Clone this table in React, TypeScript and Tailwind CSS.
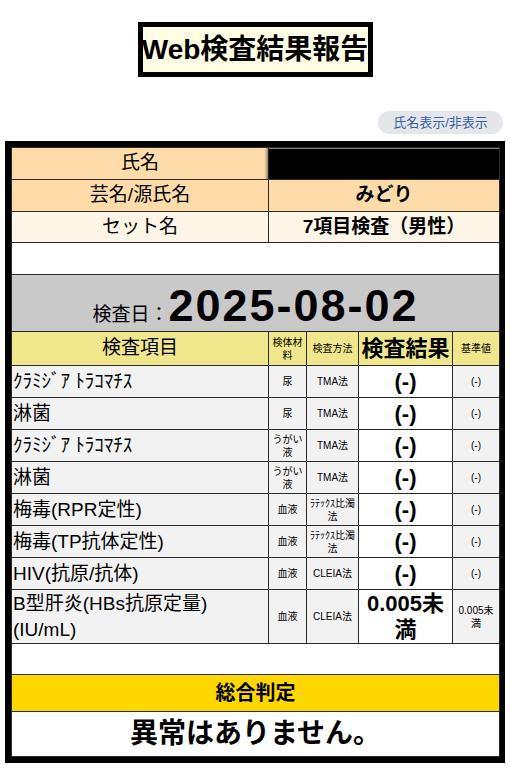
import React from "react";

const font = "font-['Liberation_Sans','Noto_Sans_CJK_JP',sans-serif]";

type Row = {
    item: string;
    material: string;
    method: string;
    result: string;
    base: string;
    tall?: boolean;
};

const rows: Row[] = [
    { item: "ｸﾗﾐｼﾞｱ ﾄﾗｺﾏﾁｽ", material: "尿", method: "TMA法", result: "(-)", base: "(-)" },
    { item: "淋菌", material: "尿", method: "TMA法", result: "(-)", base: "(-)" },
    { item: "ｸﾗﾐｼﾞｱ ﾄﾗｺﾏﾁｽ", material: "うがい液", method: "TMA法", result: "(-)", base: "(-)" },
    { item: "淋菌", material: "うがい液", method: "TMA法", result: "(-)", base: "(-)" },
    { item: "梅毒(RPR定性)", material: "血液", method: "ﾗﾃｯｸｽ比濁法", result: "(-)", base: "(-)" },
    { item: "梅毒(TP抗体定性)", material: "血液", method: "ﾗﾃｯｸｽ比濁法", result: "(-)", base: "(-)" },
    { item: "HIV(抗原/抗体)", material: "血液", method: "CLEIA法", result: "(-)", base: "(-)" },
    { item: "B型肝炎(HBs抗原定量)(IU/mL)", material: "血液", method: "CLEIA法", result: "0.005未満", base: "0.005未満", tall: true },
];

const cell = "border border-[#2b2b2b] p-0";

export default function App() {
    return (
        <div className={`min-h-screen bg-white text-black ${font} pt-[22px]`}>
            {/* title */}
            <div className="flex justify-center">
                <div className="border-[5px] border-black bg-[#fffde3] w-[235px] h-[55px] flex items-center justify-center">
                    <h1 className="text-[28px] font-bold leading-none whitespace-nowrap">Web検査結果報告</h1>
                </div>
            </div>

            <div className="flex justify-end mt-[34px] pr-[7px]">
                <button className="h-[23px] w-[125px] rounded-full bg-[#e4e6ea] text-[13px] text-[#3a5fa6] leading-none">
                    氏名表示/非表示
                </button>
            </div>

            <div className="mx-[5px] mt-[7px] border-[6px] border-black bg-white">
                <table className="w-full table-fixed border-collapse">
                    <colgroup>
                        <col className="w-[257px]" />
                        <col className="w-[38px]" />
                        <col className="w-[52px]" />
                        <col className="w-[94px]" />
                        <col className="w-[47px]" />
                    </colgroup>
                    <tbody>
                        <tr className="h-[32px] bg-[#fddcaa]">
                            <td className={`${cell} text-center text-[19px]`}>氏名</td>
                            <td colSpan={4} className={`${cell} bg-white`}>
                                <div className="h-[30px] bg-black shadow-[0_0_3px_2px_rgba(0,0,0,0.6)]" />
                            </td>
                        </tr>
                        <tr className="h-[32px] bg-[#fddcaa]">
                            <td className={`${cell} text-center text-[19px]`}>芸名/源氏名</td>
                            <td colSpan={4} className={`${cell} text-center text-[19px] font-bold`}>みどり</td>
                        </tr>
                        <tr className="h-[31px] bg-[#fdf5e6]">
                            <td className={`${cell} text-center text-[19px]`}>セット名</td>
                            <td colSpan={4} className={`${cell} text-center text-[19px] font-bold`}>7項目検査（男性）</td>
                        </tr>
                        <tr className="h-[32px]">
                            <td colSpan={5} className={cell}></td>
                        </tr>
                        <tr className="h-[57px] bg-[#c9c9c9]">
                            <td colSpan={5} className={`${cell} text-center`}>
                                <div className="flex items-baseline justify-center pt-[6px]">
                                    <span className="text-[19px]">検査日：</span>
                                    <span className="text-[45px] font-bold leading-none tracking-[2px]">2025-08-02</span>
                                </div>
                            </td>
                        </tr>
                        <tr className="h-[30px] bg-[#f0e68c]">
                            <td className={`${cell} text-center text-[19px]`}>検査項目</td>
                            <td className={`${cell} text-center text-[10px] leading-[13px] px-[2px]`}>検体材料</td>
                            <td className={`${cell} text-center text-[10px]`}>検査方法</td>
                            <td className={`${cell} text-center text-[22px] font-bold`}>検査結果</td>
                            <td className={`${cell} text-center text-[10px]`}>基準値</td>
                        </tr>
                        {rows.map((r, i) => (
                            <tr key={i} className={r.tall ? "h-[54px]" : "h-[32px]"}>
                                <td className={`${cell} bg-[#f2f2f2] text-[19px] leading-[26px] pl-[1px]`}>{r.item}</td>
                                <td className={`${cell} bg-[#f2f2f2] text-center text-[10px] leading-[13px] px-[3px]`}>{r.material}</td>
                                <td className={`${cell} bg-[#f2f2f2] text-center text-[10px] leading-[13px] px-[2px]`}>{r.method}</td>
                                <td className={`${cell} bg-white text-center text-[22px] font-bold leading-[26px] px-[4px]`}>{r.result}</td>
                                <td className={`${cell} bg-[#f2f2f2] text-center text-[10px] leading-[13px] px-[2px]`}>{r.base}</td>
                            </tr>
                        ))}
                        <tr className="h-[31px]">
                            <td colSpan={5} className={cell}></td>
                        </tr>
                        <tr className="h-[37px] bg-[#ffd700]">
                            <td colSpan={5} className={`${cell} text-center text-[20px] font-bold`}>総合判定</td>
                        </tr>
                        <tr className="h-[45px]">
                            <td colSpan={5} className={`${cell} text-center text-[28px] font-bold`}>異常はありません。</td>
                        </tr>
                    </tbody>
                </table>
            </div>
        </div>
    );
}
